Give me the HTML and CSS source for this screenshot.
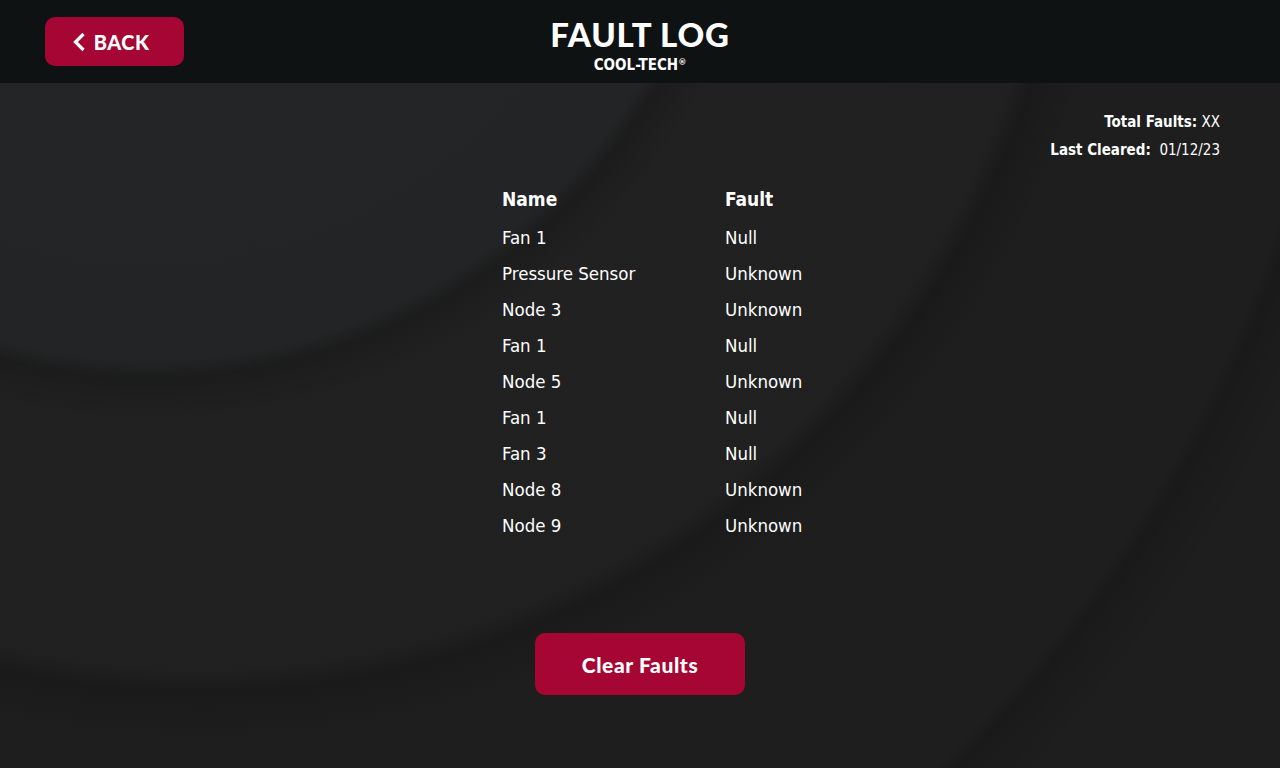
FILE: index.html
```html
<!DOCTYPE html>
<html>
<head lang="en">
    <meta charset="UTF-8">
    <title>Fault Log</title>
    <link rel="stylesheet" href="styles.css">
</head>
<body>
  <div class="header">
    <a class="back" href="#">
      <svg width="14" height="20" viewBox="0 0 14 20"><path d="M11.5 2 L3.5 10 L11.5 18" fill="none" stroke="#fff" stroke-width="3.2"/></svg>
      <span>BACK</span>
    </a>
    <div class="title">
      <h1>FAULT LOG</h1>
      <div class="brand">COOL-TECH<sup>®</sup></div>
    </div>
  </div>
  <div class="main">
    <div class="stats">
      <div><b>Total Faults:</b> XX</div>
      <div><b>Last Cleared:</b>&nbsp; 01/12/23</div>
    </div>
    <div class="log">
      <div class="th">Name</div><div class="th">Fault</div>
      <div>Fan 1</div><div>Null</div>
      <div>Pressure Sensor</div><div>Unknown</div>
      <div>Node 3</div><div>Unknown</div>
      <div>Fan 1</div><div>Null</div>
      <div>Node 5</div><div>Unknown</div>
      <div>Fan 1</div><div>Null</div>
      <div>Fan 3</div><div>Null</div>
      <div>Node 8</div><div>Unknown</div>
      <div>Node 9</div><div>Unknown</div>
    </div>
    <a class="clear" href="#">Clear Faults</a>
  </div>
</body>
</html>
```

FILE: styles.css
```css
*{
  margin: 0;
  padding: 0;
  box-sizing: border-box;
}
html, body{
  height: 100%;
}
body{
  background-color: #1e1e1e;
  /* soft arcs behind the page, shadow just outside each edge */
  background-image:
    radial-gradient(circle at 150px -210px, #242527 0, #232425 570px, #1c1c1c 588px, rgba(30,30,30,0) 630px),
    radial-gradient(circle at 200px -180px, rgba(36,36,37,0.6) 0, rgba(35,35,35,0.5) 850px, rgba(24,24,24,0.7) 872px, rgba(30,30,30,0) 920px),
    radial-gradient(circle at 0 -200px, rgba(0,0,0,0) 0, rgba(0,0,0,0) 1345px, rgba(0,0,0,0.14) 1360px, rgba(0,0,0,0) 1420px);
  background-repeat: no-repeat;
  color: #fff;
  font-family: "Liberation Sans Narrow", "DejaVu Sans Condensed", "Roboto", sans-serif;
  display: flex;
  flex-direction: column;
}
a{
  color: #fff;
  text-decoration: none;
}
.header{
  height: 83px;
  background-color: #0f1213;
  display: flex;
  align-items: flex-start;
  position: relative;
}
.back{
  margin: 17px 0 0 45px;
  width: 139px;
  height: 49px;
  border-radius: 10px;
  background-color: #a60633;
  display: flex;
  align-items: center;
  justify-content: center;
  gap: 8px;
  font-family: "Lato", "Open Sans", sans-serif;
  font-weight: 900;
  font-size: 20px;
  letter-spacing: 0.5px;
}
.back svg{
  margin-left: -8px;
}
.title{
  position: absolute;
  left: 0;
  right: 0;
  top: 15px;
  text-align: center;
  pointer-events: none;
}
.title h1{
  font-family: "Lato", "Open Sans", sans-serif;
  font-weight: 900;
  font-size: 33px;
  line-height: 38px;
  letter-spacing: 0.8px;
}
.brand{
  font-weight: bold;
  font-size: 15px;
  line-height: 18px;
}
.brand sup{
  font-size: 9px;
  vertical-align: 5px;
}
.main{
  flex: 1;
  display: flex;
  flex-direction: column;
}
.stats{
  align-self: flex-end;
  text-align: right;
  margin: 25px 60px 0 0;
  font-size: 15px;
  line-height: 28px;
}
.log{
  width: 276px;
  margin: 19px auto 0;
  display: grid;
  grid-template-columns: 223px auto;
  grid-auto-rows: 36px;
  font-size: 18.5px;
  align-items: center;
}
.log .th{
  font-weight: bold;
  font-size: 19px;
  height: 40px;
  line-height: 36px;
}
.clear{
  align-self: center;
  margin-top: 90px;
  width: 210px;
  height: 62px;
  border-radius: 10px;
  background-color: #a60633;
  display: flex;
  align-items: center;
  justify-content: center;
  font-family: "Lato", "Open Sans", sans-serif;
  font-weight: 900;
  font-size: 21px;
  letter-spacing: 0.6px;
}
```
